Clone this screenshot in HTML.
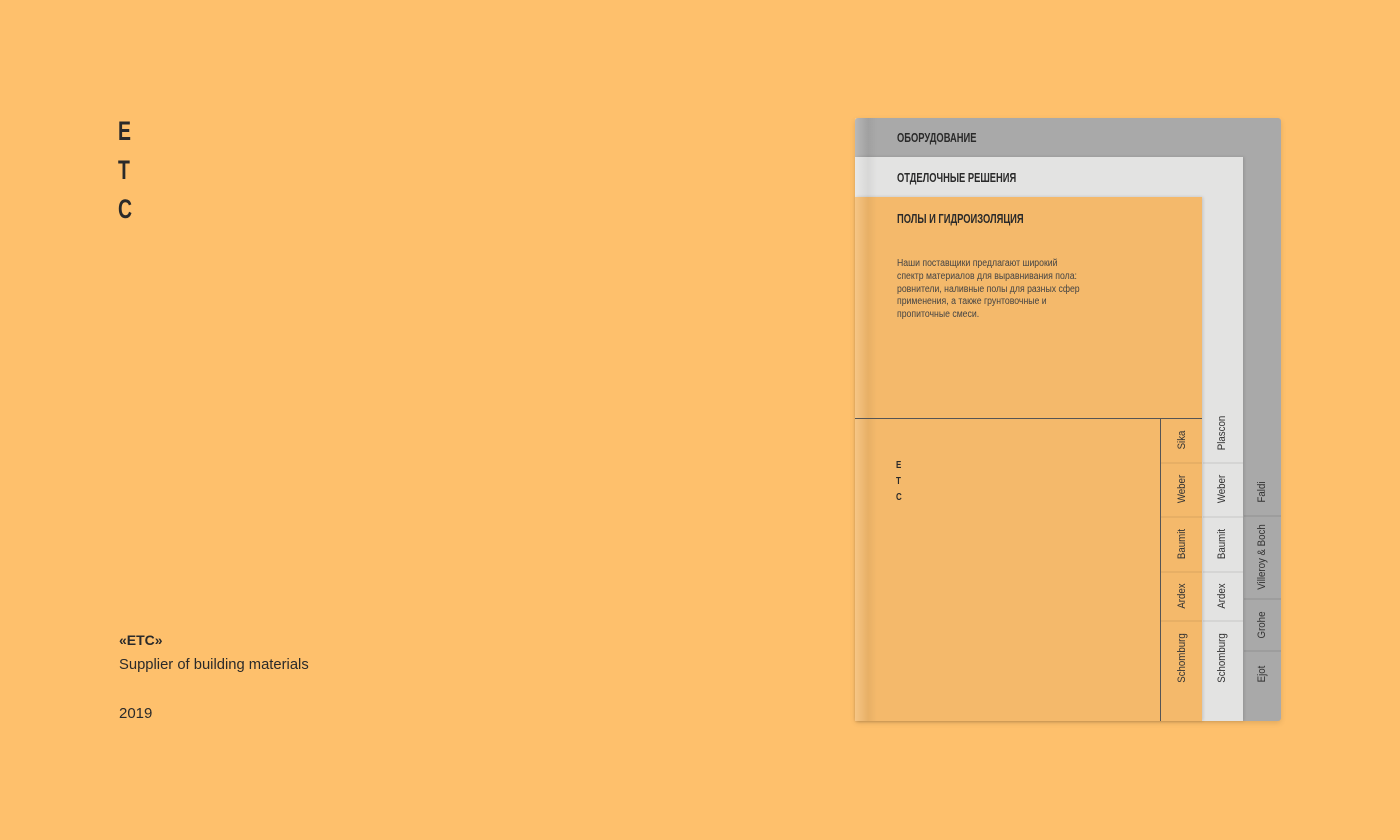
<!DOCTYPE html>
<html><head><meta charset="utf-8"><style>
body{margin:0;width:1400px;height:840px;background:#FEC06C;position:relative;overflow:hidden;font-family:"Liberation Sans",sans-serif;color:#2a2a2a}
.a{position:absolute}
.c{transform-origin:0 0;white-space:nowrap}
.big{font-size:27px;font-weight:bold;left:118px;line-height:29px;transform:scaleX(.72);transform-origin:0 0}
.rot{position:absolute;transform:translate(-50%,-50%) rotate(-90deg) scaleX(.88);white-space:nowrap;font-size:11px;color:#333}
.sep{position:absolute;height:2px}
</style></head><body>
<div class="a big" style="top:117px">E</div>
<div class="a big" style="top:156px">T</div>
<div class="a big" style="top:195px">C</div>
<div class="a" style="left:119px;top:632px;font-size:14px;font-weight:bold">«ETC»</div>
<div class="a c" style="left:119px;top:656px;font-size:15px;transform:scaleX(.985)">Supplier of building materials</div>
<div class="a" style="left:119px;top:705px;font-size:15px">2019</div>

<div class="a" style="left:855px;top:118px;width:426px;height:603px;background:#A9A9A9;border-radius:3px;box-shadow:0 2px 6px rgba(0,0,0,.12)"></div>
<div class="a" style="left:855px;top:157px;width:388px;height:564px;background:#E3E3E2;box-shadow:1px 0 3px rgba(0,0,0,.15)"></div>
<div class="a" style="left:855px;top:197px;width:347px;height:524px;background:#F4B96B;box-shadow:1px 0 3px rgba(0,0,0,.15)"></div>
<div class="a" style="left:855px;top:118px;width:22px;height:603px;background:linear-gradient(90deg,rgba(255,255,255,.18),rgba(0,0,0,.05) 60%,rgba(0,0,0,0))"></div>
<div class="a c" style="left:897px;top:130px;font-size:13px;font-weight:bold;transform:scaleX(.72)">ОБОРУДОВАНИЕ</div>
<div class="a c" style="left:897px;top:170px;font-size:13px;font-weight:bold;transform:scaleX(.72)">ОТДЕЛОЧНЫЕ РЕШЕНИЯ</div>
<div class="a c" style="left:897px;top:211px;font-size:13px;font-weight:bold;transform:scaleX(.72)">ПОЛЫ И ГИДРОИЗОЛЯЦИЯ</div>
<div class="a c" style="left:897px;top:258px;font-size:10px;line-height:12.8px;color:#444;transform:scaleX(.87)">Наши поставщики предлагают широкий<br>спектр материалов для выравнивания пола:<br>ровнители, наливные полы для разных сфер<br>применения, а также грунтовочные и<br>пропиточные смеси.</div>
<div class="a" style="left:855px;top:418px;width:347px;height:1px;background:#555"></div>
<div class="a" style="left:1160px;top:418px;width:1px;height:303px;background:#555"></div>
<div class="a" style="left:896px;top:458px;font-size:10px;font-weight:bold;line-height:16px;transform:scaleX(.8);transform-origin:0 0">E<br>T<br>C</div>

<div class="sep" style="left:1161px;top:462px;width:41px;background:rgba(0,0,0,.05)"></div>
<div class="sep" style="left:1161px;top:516px;width:41px;background:rgba(0,0,0,.05)"></div>
<div class="sep" style="left:1161px;top:571px;width:41px;background:rgba(0,0,0,.05)"></div>
<div class="sep" style="left:1161px;top:620px;width:41px;background:rgba(0,0,0,.05)"></div>
<div class="sep" style="left:1203px;top:462px;width:40px;background:rgba(0,0,0,.06)"></div>
<div class="sep" style="left:1203px;top:516px;width:40px;background:rgba(0,0,0,.06)"></div>
<div class="sep" style="left:1203px;top:571px;width:40px;background:rgba(0,0,0,.06)"></div>
<div class="sep" style="left:1203px;top:620px;width:40px;background:rgba(0,0,0,.06)"></div>
<div class="sep" style="left:1244px;top:515px;width:37px;background:rgba(0,0,0,.07)"></div>
<div class="sep" style="left:1244px;top:598px;width:37px;background:rgba(0,0,0,.07)"></div>
<div class="sep" style="left:1244px;top:650px;width:37px;background:rgba(0,0,0,.07)"></div>

<div class="rot" style="left:1182px;top:440px">Sika</div>
<div class="rot" style="left:1182px;top:489px">Weber</div>
<div class="rot" style="left:1182px;top:544px">Baumit</div>
<div class="rot" style="left:1182px;top:596px">Ardex</div>
<div class="rot" style="left:1182px;top:658px">Schomburg</div>
<div class="rot" style="left:1222px;top:433px">Plascon</div>
<div class="rot" style="left:1222px;top:489px">Weber</div>
<div class="rot" style="left:1222px;top:544px">Baumit</div>
<div class="rot" style="left:1222px;top:596px">Ardex</div>
<div class="rot" style="left:1222px;top:658px">Schomburg</div>
<div class="rot" style="left:1262px;top:492px">Faldi</div>
<div class="rot" style="left:1262px;top:557px">Villeroy &amp; Boch</div>
<div class="rot" style="left:1262px;top:625px">Grohe</div>
<div class="rot" style="left:1262px;top:674px">Ejot</div>
</body></html>
